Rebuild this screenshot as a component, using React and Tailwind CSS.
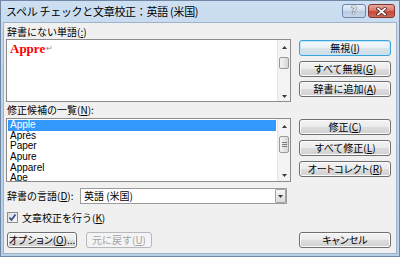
import React from "react";

const CJK = "font-['Noto_Sans_CJK_JP',sans-serif]";

function Btn({ children, def, disabled, className = "" }) {
  const base =
    "h-[16px] flex items-center justify-center rounded-[3px] border text-[10px] leading-none font-['Noto_Sans_CJK_JP',sans-serif]";
  const look = disabled
    ? "border-[#b5b9bc] bg-[#f4f4f4] text-[#a3a3a3]"
    : def
    ? "border-[#3ca4dc] bg-[linear-gradient(180deg,#f4f8fb_0%,#eaf1f6_48%,#d9e4ec_52%,#cfdce6_100%)] text-black shadow-[inset_0_0_0_1px_#c2e6f8]"
    : "border-[#707070] bg-[linear-gradient(180deg,#f3f3f3_0%,#ebebeb_48%,#dddddd_52%,#d0d0d0_100%)] text-black shadow-[inset_0_0_0_1px_#fbfbfb]";
  return <div className={`${base} ${look} ${className}`}>{children}</div>;
}

function U({ children }) {
  return <span className="underline underline-offset-1">{children}</span>;
}

function Up() {
  return (
    <svg width="5" height="3" viewBox="0 0 5 3">
      <path d="M0 3 L2.5 0 L5 3 Z" fill="#3a3a3a" />
    </svg>
  );
}
function Down() {
  return (
    <svg width="5" height="3" viewBox="0 0 5 3">
      <path d="M0 0 L5 0 L2.5 3 Z" fill="#3a3a3a" />
    </svg>
  );
}

function Thumb({ h, grip }) {
  return (
    <div
      className={`${h} mx-[1px] rounded-[2px] border border-[#9a9a9a] bg-[linear-gradient(90deg,#f4f4f4_0%,#e6e6e6_50%,#d6d6d6_100%)] flex flex-col items-center justify-center gap-[1px]`}
    >
      {grip && (
        <>
          <div className="w-[5px] h-[1px] bg-[#7c7c7c]" />
          <div className="w-[5px] h-[1px] bg-[#7c7c7c]" />
          <div className="w-[5px] h-[1px] bg-[#7c7c7c]" />
        </>
      )}
    </div>
  );
}

export default function App() {
  const items = ["Apple", "Après", "Paper", "Apure", "Apparel", "Ape"];
  return (
    <div className="w-[400px] h-[257px] flex flex-col border border-[#6f88a6] bg-[linear-gradient(180deg,#cddff1_0%,#bed4eb_30%,#b8cfe8_100%)] overflow-hidden">
      {/* title bar */}
      <div className="h-[21px] flex items-start pl-[5px] pr-[4px] shrink-0">
        <div className={`${CJK} text-[11px] leading-[20px] text-black tracking-[-0.3px]`}>
          スペル チェックと文章校正：英語 (米国)
        </div>
        <div className="ml-auto flex gap-[2px] pt-[3px]">
          <div className="w-[24px] h-[14px] rounded-[3px] border border-[#6c86a8] bg-[linear-gradient(180deg,#e6eef8_0%,#cfdcec_48%,#b9cbe2_52%,#c6d6ea_100%)] flex items-center justify-center">
            <span className="font-['DejaVu_Sans',sans-serif] font-bold text-[10px] leading-none text-[#f4f4f4] [text-shadow:0_0_1px_#30363d,0_0_1px_#30363d]">
              ?
            </span>
          </div>
          <div className="w-[27px] h-[14px] rounded-[3px] border border-[#83342c] bg-[linear-gradient(180deg,#e8a89d_0%,#d7786a_45%,#c4493a_55%,#cf6a57_100%)] flex items-center justify-center">
            <svg width="11" height="9" viewBox="0 0 11 9">
              <path d="M2 1.5 L9 7.5 M9 1.5 L2 7.5" stroke="#4a1c18" strokeWidth="3.2" strokeLinecap="square" />
              <path d="M2 1.5 L9 7.5 M9 1.5 L2 7.5" stroke="#ffffff" strokeWidth="1.8" strokeLinecap="square" />
            </svg>
          </div>
        </div>
      </div>

      {/* client */}
      <div className="flex-1 mx-[2px] mb-[2px] bg-[#f0f0f0] border border-[#9fb2c8] flex pl-[2px] pt-[2px]">
        {/* left column */}
        <div className="w-[285px] flex flex-col">
          <div className={`${CJK} h-[14px] text-[10px] leading-[14px] pl-[1px] text-black`}>
            辞書にない単語(<U>:</U>)
          </div>
          <div className="h-[63px] border border-[#8c8c8c] bg-white flex">
            <div className="flex-1 pl-[3px] pt-[1px] flex items-start">
              <span className="font-['Liberation_Serif',serif] font-bold text-[13px] leading-[16px] text-[#ff0000]">
                Appre
              </span>
              <span className="text-[8px] leading-[16px] text-[#8a8a8a] font-['DejaVu_Sans',sans-serif] ml-[1px]">
                ↵
              </span>
            </div>
            <div className="w-[13px] bg-[#f3f3f3] border-l border-[#e6e6e6] flex flex-col">
              <div className="h-[15px] flex items-center justify-center">
                <Up />
              </div>
              <div className="mt-[2px]">
                <Thumb h="h-[12px]" />
              </div>
              <div className="flex-1" />
              <div className="h-[10px] flex items-center justify-center">
                <Down />
              </div>
            </div>
          </div>
          <div className={`${CJK} h-[16px] text-[10px] leading-[16px] pl-[1px] text-black`}>
            修正候補の一覧(<U>N</U>):
          </div>
          <div className="h-[64px] border border-[#8c8c8c] bg-white flex">
            <div className="flex-1 pt-[1px] pl-[1px] pr-[1px] overflow-hidden">
              {items.map((it, i) => (
                <div
                  key={it}
                  className={`h-[10.6px] flex items-center pl-[2px] font-['Liberation_Sans',sans-serif] text-[10px] leading-none ${
                    i === 0 ? "bg-[#3399ff] text-white" : "text-black"
                  }`}
                >
                  {it}
                </div>
              ))}
            </div>
            <div className="w-[13px] bg-[#f3f3f3] border-l border-[#e6e6e6] flex flex-col">
              <div className="h-[15px] flex items-center justify-center">
                <Up />
              </div>
              <div className="mt-[2px]">
                <Thumb h="h-[17px]" grip />
              </div>
              <div className="flex-1" />
              <div className="h-[12px] flex items-center justify-center">
                <Down />
              </div>
            </div>
          </div>

          {/* language row */}
          <div className="mt-[6px] h-[16px] flex items-center">
            <div className={`${CJK} w-[74px] text-[10px] leading-none pl-[1px] text-black`}>
              辞書の言語(<U>D</U>):
            </div>
            <div className="w-[207px] h-[16px] border border-[#9a9a9a] bg-white flex items-center">
              <div className={`${CJK} flex-1 pl-[3px] text-[10px] leading-none text-black`}>英語 (米国)</div>
              <div className="w-[11px] h-[14px] border border-[#a3a3a3] rounded-[1px] bg-[linear-gradient(180deg,#f6f6f6_0%,#e8e8e8_50%,#d9d9d9_100%)] flex items-center justify-center">
                <Down />
              </div>
            </div>
          </div>

          {/* checkbox row */}
          <div className="mt-[7px] h-[13px] flex items-center pl-[1px]">
            <div className="w-[11px] h-[11px] border border-[#8e8f8f] bg-[linear-gradient(135deg,#dcdcdc_0%,#f6f6f6_100%)] flex items-center justify-center">
              <svg width="9" height="9" viewBox="0 0 9 9">
                <path d="M1.5 4.5 L3.5 7 L7.5 1.5" fill="none" stroke="#2a4a86" strokeWidth="1.6" />
              </svg>
            </div>
            <div className={`${CJK} ml-[4px] text-[10px] leading-none text-black`}>
              文章校正を行う(<U>K</U>)
            </div>
          </div>

          {/* bottom buttons */}
          <div className="mt-[8px] flex pl-[1px]">
            <Btn className="w-[70px] [font-feature-settings:'palt']">
              オプション(<U>O</U>)...
            </Btn>
            <Btn disabled className="w-[66px] ml-[9px]">
              元に戻す(<U>U</U>)
            </Btn>
          </div>
        </div>

        {/* right column */}
        <div className="ml-[8px] w-[92px] flex flex-col">
          <Btn def className="mt-[15px]">
            無視(<U>I</U>)
          </Btn>
          <Btn className="mt-[5px]">
            すべて無視(<U>G</U>)
          </Btn>
          <Btn className="mt-[4px]">
            辞書に追加(<U>A</U>)
          </Btn>
          <Btn className="mt-[22px]">
            修正(<U>C</U>)
          </Btn>
          <Btn className="mt-[5px]">
            すべて修正(<U>L</U>)
          </Btn>
          <Btn className="mt-[5px] [font-feature-settings:'palt']">
            オートコレクト(<U>R</U>)
          </Btn>
          <Btn className="mt-[55px] [font-feature-settings:'palt']">キャンセル</Btn>
        </div>
      </div>
    </div>
  );
}
